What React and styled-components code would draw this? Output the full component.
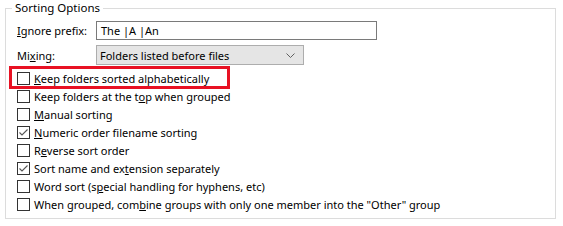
import React from 'react'
import styled, { createGlobalStyle } from 'styled-components'

const Global = createGlobalStyle`
  html, body { margin: 0; padding: 0; background: #fff; }
  body { font-family: "Noto Sans", "Open Sans", sans-serif; font-size: 11px; color: #000; }
`

const Page = styled.div`
  width: 563px;
  height: 226px;
  padding-left: 5px;
  box-sizing: border-box;
`

const Group = styled.fieldset`
  margin: 0;
  width: 551px;
  height: 219px;
  box-sizing: border-box;
  border: 1px solid #dcdcdc;
  padding: 5px 0 0 11px;
`

const Legend = styled.legend`
  padding: 0 3px;
  margin-left: -5px;
  line-height: 16px;
  font-size: 11.5px;
`

const FieldRow = styled.div`
  display: flex;
  align-items: center;
  height: ${p => p.$h}px;
  margin-bottom: ${p => p.$mb || 0}px;
`

const Label = styled.span`
  width: 79px;
  flex: none;
`

const TextBox = styled.div`
  width: 281px;
  height: 19px;
  box-sizing: border-box;
  border: 1px solid #7a7a7a;
  padding-left: 4px;
  display: flex;
  align-items: center;
`

const Select = styled.div`
  width: 208px;
  height: 20px;
  box-sizing: border-box;
  border: 1px solid #adadad;
  background: #e5e5e5;
  padding: 0 8px 0 3px;
  display: flex;
  align-items: center;
  justify-content: space-between;
`

const List = styled.div`
  display: flex;
  flex-direction: column;
`

const CheckRow = styled.div`
  position: relative;
  display: flex;
  align-items: center;
  height: 18px;
  gap: 4px;
  ${p => p.$marked && `
    &::after {
      content: "";
      position: absolute;
      left: -8px;
      top: -3px;
      width: 221px;
      height: 23px;
      box-sizing: border-box;
      border: 3px solid #e81123;
      pointer-events: none;
    }
  `}
`

const Box = styled.span`
  width: 13px;
  height: 13px;
  box-sizing: border-box;
  border: 1px solid #333;
  background: #fff;
  flex: none;
  display: flex;
  align-items: center;
  justify-content: center;
`

const U = styled.span`
  text-decoration: underline;
  text-underline-offset: 1px;
`

const Check = () => (
  <svg width="11" height="11" viewBox="0 0 11 11">
    <path d="M1.5 5.5 L4 8 L9.5 2.5" fill="none" stroke="#555" strokeWidth="1.1" />
  </svg>
)

const Chevron = () => (
  <svg width="9" height="5" viewBox="0 0 9 5">
    <path d="M0.5 0.5 L4.5 4.5 L8.5 0.5" fill="none" stroke="#606060" strokeWidth="1" />
  </svg>
)

const options = [
  { pre: '', u: 'K', post: 'eep folders sorted alphabetically', marked: true },
  { pre: 'Keep folders at the t', u: 'o', post: 'p when grouped' },
  { pre: '', u: 'M', post: 'anual sorting' },
  { pre: '', u: 'N', post: 'umeric order filename sorting', checked: true },
  { pre: 'R', u: 'e', post: 'verse sort order' },
  { pre: 'Sort name and ex', u: 't', post: 'ension separately', checked: true },
  { pre: 'Word sort (s', u: 'p', post: 'ecial handling for hyphens, etc)' },
  { pre: 'When grouped, com', u: 'b', post: 'ine groups with only one member into the "Other" group' },
]

export default function App() {
  return (
    <Page>
      <Global />
      <Group>
        <Legend>Sorting Options</Legend>
        <FieldRow $h={19} $mb={5}>
          <Label><U>I</U>gnore prefix:</Label>
          <TextBox>The |A |An</TextBox>
        </FieldRow>
        <FieldRow $h={20} $mb={4}>
          <Label>Mi<U>x</U>ing:</Label>
          <Select>
            <span>Folders listed before files</span>
            <Chevron />
          </Select>
        </FieldRow>
        <List>
          {options.map((o, i) => (
            <CheckRow key={i} $marked={o.marked}>
              <Box>{o.checked && <Check />}</Box>
              <span>{o.pre}<U>{o.u}</U>{o.post}</span>
            </CheckRow>
          ))}
        </List>
      </Group>
    </Page>
  )
}
